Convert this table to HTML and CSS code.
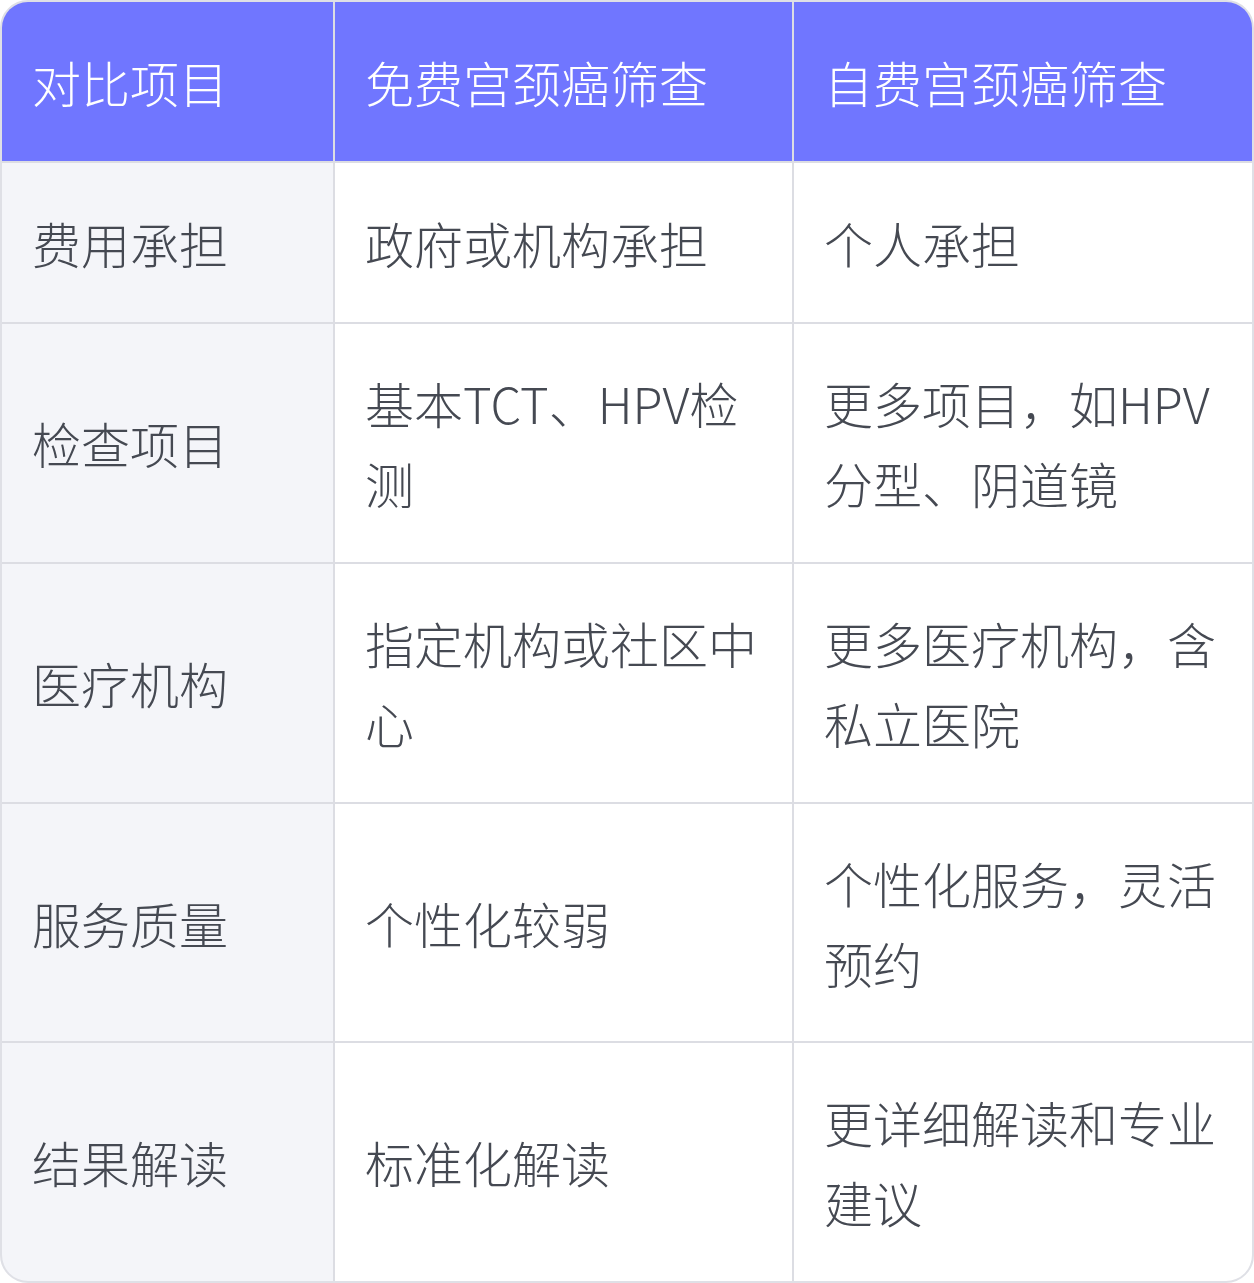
FILE: index.html
```html
<!DOCTYPE html>
<html lang="zh-CN">
<head>
<meta charset="utf-8">
<title>宫颈癌筛查对比</title>
<link rel="stylesheet" href="styles.css">
</head>
<body>
<div class="table">
  <div class="cell head">对比项目</div>
  <div class="cell head">免费宫颈癌筛查</div>
  <div class="cell head">自费宫颈癌筛查</div>

  <div class="cell label">费用承担</div>
  <div class="cell">政府或机构承担</div>
  <div class="cell">个人承担</div>

  <div class="cell label">检查项目</div>
  <div class="cell">基本TCT、HPV检测</div>
  <div class="cell">更多项目，如HPV分型、阴道镜</div>

  <div class="cell label">医疗机构</div>
  <div class="cell">指定机构或社区中心</div>
  <div class="cell">更多医疗机构，含私立医院</div>

  <div class="cell label">服务质量</div>
  <div class="cell">个性化较弱</div>
  <div class="cell">个性化服务，灵活预约</div>

  <div class="cell label">结果解读</div>
  <div class="cell">标准化解读</div>
  <div class="cell">更详细解读和专业建议</div>
</div>
</body>
</html>
```

FILE: styles.css
```css
html, body {
  margin: 0;
  padding: 0;
  background: #ffffff;
}

.table {
  width: 1254px;
  height: 1283px;
  box-sizing: border-box;
  border: 2px solid #dfe0e6;
  border-radius: 28px;
  overflow: hidden;
  background: #dcdde3;
  display: grid;
  grid-template-columns: 331px 457px 458px;
  grid-template-rows: 159px 159px 238px 238px 237px 238px;
  gap: 2px;
  font-family: "Noto Sans CJK SC", "Noto Sans", sans-serif;
  font-size: 49px;
  font-weight: 300;
  line-height: 80px;
  color: #454952;
}

.cell {
  background: #ffffff;
  padding: 0 24px 0 30px;
  display: flex;
  align-items: center;
}

.cell.label {
  background: #f4f5f9;
}

.cell.head {
  background: #7076ff;
  color: #ffffff;
}
```
